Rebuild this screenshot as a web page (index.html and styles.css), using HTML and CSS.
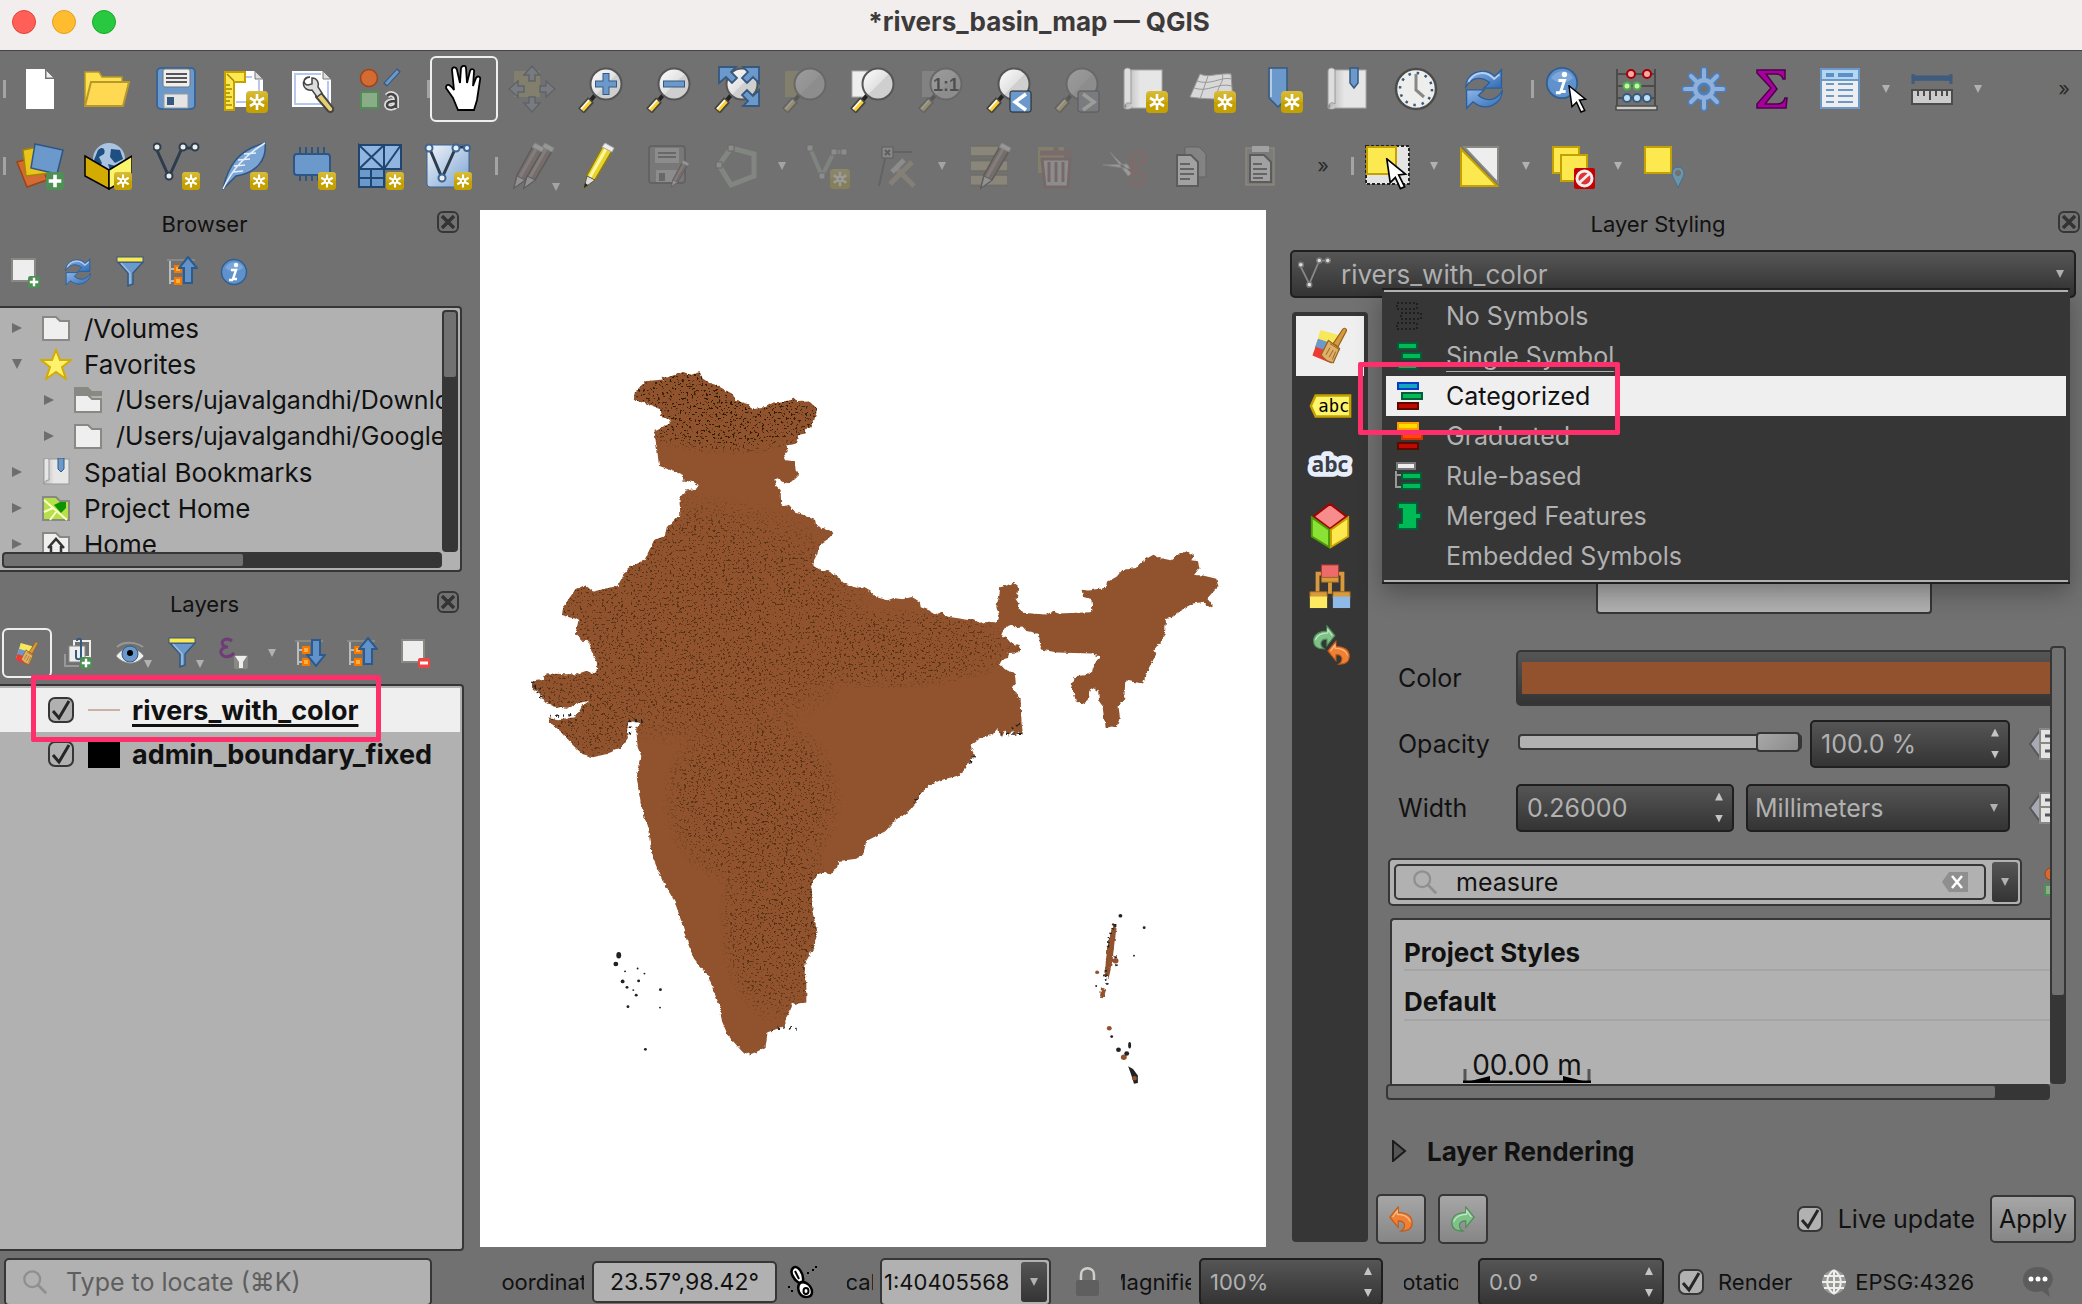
FILE: index.html
```html
<!DOCTYPE html>
<html lang="en">
<head>
    <meta charset="UTF-8">
    <meta name="viewport" content="width=device-width, initial-scale=1.0">
    <title>*rivers_basin_map — QGIS</title>
    <link rel="stylesheet" href="styles.css">
</head>
<body>
    <!-- shared icon parts -->
    <svg class="defs" aria-hidden="true">
        <defs>
            <linearGradient id="gold" x1="0" y1="0" x2="0" y2="1"><stop offset="0" stop-color="#d9bd3a"/><stop offset=".5" stop-color="#c9a80f"/><stop offset=".51" stop-color="#c4a000"/></linearGradient>
            <linearGradient id="glass" x1="0" y1="0" x2="1" y2="1"><stop offset="0" stop-color="#fff"/><stop offset=".5" stop-color="#e2e2e2"/><stop offset=".52" stop-color="#cfcfcf"/></linearGradient>
            <linearGradient id="blue" x1="0" y1="0" x2="1" y2="1"><stop offset="0" stop-color="#8fb5e6"/><stop offset="1" stop-color="#2f6cb5"/></linearGradient>
            <linearGradient id="sky" x1="0" y1="0" x2="1" y2="1"><stop offset="0" stop-color="#f2f5fa"/><stop offset="1" stop-color="#7ba3d3"/></linearGradient>
            <linearGradient id="paper" x1="0" y1="0" x2="1" y2="0"><stop offset="0" stop-color="#b9b9b9"/><stop offset=".4" stop-color="#e6e6e6"/></linearGradient>
        </defs>
        <symbol id="badge" viewBox="0 0 22 22"><rect width="22" height="22" rx="4" fill="url(#gold)"/><path d="M11 3v16M4 7l14 8M18 7L4 15" stroke="#fff" stroke-width="2.6"/><circle cx="11" cy="11" r="3.6" fill="#fff"/><circle cx="11" cy="11" r="1.4" fill="#c4a000"/></symbol>
        <symbol id="lens" viewBox="0 0 48 48"><path d="M20 29l-5 6" stroke="#222" stroke-width="4"/><path d="M15 35L5 46" stroke="#444" stroke-width="8"/><path d="M14 36l-8 9" stroke="#fcd02f" stroke-width="4.500"/><path d="M13 35l-8 9" stroke="#fff" stroke-width="1.500"/><circle cx="30" cy="19" r="15.500" fill="url(#glass)" stroke="#555" stroke-width="2"/></symbol>
        <symbol id="refresh" viewBox="0 0 48 48"><path d="M4 22C4 8 22-2 36 10l7-7v20H24l6-6C20 9 10 12 4 22z" fill="url(#blue)" stroke="#2a5f9e" stroke-width="1.500"/><path d="M44 26C44 40 26 50 12 38l-7 7V25h19l-6 6c10 8 20 5 26-5z" fill="url(#blue)" stroke="#2a5f9e" stroke-width="1.500"/><path d="M7 16C14 4 27 4 35 13l6-5" fill="none" stroke="#b9d0ec" stroke-width="2"/></symbol>
        <symbol id="info" viewBox="0 0 28 28"><circle cx="14" cy="14" r="12.500" fill="#5f92cd" stroke="#335f90" stroke-width="1.500"/><path d="M5 10c5-8 15-7 18 0-7 5-11 5-18 0z" fill="#8fb5e0" opacity=".6"/><circle cx="16" cy="7" r="2.200" fill="#fff"/><path d="M11 12h5l-3 9h4M9 22h4" fill="none" stroke="#fff" stroke-width="2.400"/></symbol>
        <symbol id="folder" viewBox="0 0 28 28"><path d="M1 3h13l4 4h9v19H1z" fill="#efefef" stroke="#888983" stroke-width="2"/></symbol>
        <symbol id="funnel" viewBox="0 0 28 32"><path d="M2 6l10 11v13l5-2V17L27 6z" fill="#6c99cb" stroke="#35597f" stroke-width="1.500"/><path d="M5 7l9 10v11" fill="none" stroke="#9cbce0" stroke-width="1.500"/><rect x="1" y="1" width="26" height="5" fill="#fce94f" stroke="#35597f"/></symbol>
        <symbol id="treelist" viewBox="0 0 30 30"><path d="M0 3h28" stroke="#888983" stroke-width="2"/><path d="M3 4v23M3 12h7M3 24h7" fill="none" stroke="#bbb" stroke-width="2"/><rect x="8" y="9" width="6" height="6" fill="#fcaf3e" stroke="#f57900" stroke-width="2"/><rect x="8" y="21" width="6" height="6" fill="#fcaf3e" stroke="#f57900" stroke-width="2"/></symbol>
        <symbol id="uparrow" viewBox="0 0 20 28"><path d="M10 1l9 11h-5v15H6V12H1z" fill="#6192ca" stroke="#2c5a8c" stroke-width="2"/></symbol>
        <symbol id="vec" viewBox="0 0 48 48"><path d="M3 6l13 29L29 6h12" fill="none" stroke="#2e3d4d" stroke-width="3"/><g fill="#eee" stroke="#2e3d4d" stroke-width="2"><circle cx="4" cy="5" r="3.500"/><circle cx="16" cy="34" r="3.500"/><circle cx="30" cy="5" r="3.500"/><circle cx="42" cy="5" r="3.500"/></g></symbol>
        <symbol id="pencil" viewBox="0 0 48 48"><path d="M9 46l3-13L28 4l9 5-17 29z" fill="#e8d430" stroke="#8d7d10" stroke-width="1.500"/><path d="M15 35L31 7" stroke="#fff8a0" stroke-width="3"/><path d="M9 46l3-12 8 4z" fill="#ddd" stroke="#555"/><path d="M27 5l3-4 9 5-2 4z" fill="#eee" stroke="#aaa"/><path d="M9 46l1-5 3 2z" fill="#222"/></symbol>
        <symbol id="oldpencil" viewBox="0 0 48 48"><path d="M9 46l3-13L28 4l9 5-17 29z" fill="#86645a" stroke="#3a2a26" stroke-width="1.500"/><path d="M15 35L31 7" stroke="#b59a90" stroke-width="3"/><path d="M9 46l3-12 8 4z" fill="#ddd" stroke="#333"/><path d="M27 5l3-4 9 5-2 4z" fill="#eee" stroke="#aaa"/></symbol>
        <symbol id="cursor" viewBox="0 0 26 40"><path d="M1 1l22 18-8 1 7 14-5 2-6-13-6 6z" fill="#fff" stroke="#000" stroke-width="2"/></symbol>
        <symbol id="brush" viewBox="0 0 44 48"><path d="M10 4l22 6-8 30L1 34z" fill="#f7e85b"/><path d="M7 15l22 7-4 13-22-9z" fill="#6c99cb"/><path d="M4 25l22 8-2 13L0 36z" fill="#ee3a34"/><path d="M26 21L38 3c2-3 6 0 4 3L32 25z" fill="#d99a3d" stroke="#96631c" stroke-width="1.500"/><path d="M20 17l14 10-8 18c-6-1-12-5-15-10z" fill="#deb06a" stroke="#96631c" stroke-width="1.500"/><path d="M22 21l12 8M17 35l5-9M21 38l5-9M25 41l4-10" stroke="#96631c" stroke-width="1.200"/></symbol>
        <symbol id="close" viewBox="0 0 22 22"><rect x="1" y="1" width="20" height="20" rx="5" fill="none" stroke="#363636" stroke-width="2"/><path d="M5 5l12 12M17 5L5 17" stroke="#333" stroke-width="3.500"/></symbol>
        <symbol id="search" viewBox="0 0 28 28"><circle cx="11" cy="11" r="8.500" fill="none" stroke="#8f8f8f" stroke-width="2.500"/><path d="M17 17l9 9" stroke="#8f8f8f" stroke-width="3"/></symbol>
        <symbol id="undo" viewBox="0 0 26 28"><path d="M1 12L10 1v6c9 0 15 4 15 11 0 6-5 9-12 9 5-3 6-11-3-11v7z" fill="#ef8136" stroke="#c25a17" stroke-width="1.200"/><path d="M4 12l5-7v4c7 0 12 2 14 8" fill="none" stroke="#ffc08c" stroke-width="1.200"/></symbol>
        <symbol id="redo" viewBox="0 0 26 28"><path d="M25 12L16 1v6C7 7 1 11 1 18c0 6 5 9 12 9-5-3-6-11 3-11v7z" fill="#7fc189" stroke="#4d8c57" stroke-width="1.200"/><path d="M22 12l-5-7v4C10 9 5 11 3 17" fill="none" stroke="#c5e8ca" stroke-width="1.200"/></symbol>
        <symbol id="plus" viewBox="0 0 20 20"><rect width="20" height="20" rx="4" fill="#4f8f55"/><path d="M10 3v14M3 10h14" stroke="#fff" stroke-width="4"/></symbol>
        <symbol id="datadef" viewBox="0 0 32 32"><path d="M12 1L1 16l11 15" fill="#a9a9b4" stroke="#55585c" stroke-width="2"/><rect x="11" y="1" width="20" height="30" fill="#e4e4e4" stroke="#888983" stroke-width="2"/><path d="M12 15h20" stroke="#888983" stroke-width="2"/><path d="M16 8h16M16 23h16" stroke="#555" stroke-width="3"/></symbol>
    </svg>

    <header class="titlebar">
        <div class="lights"><button class="light red" aria-label="Close"></button><button class="light amber" aria-label="Minimize"></button><button class="light green" aria-label="Zoom"></button></div>
        <h1>*rivers_basin_map — QGIS</h1>
    </header>

    <nav class="toolbars">
        <div class="toolbar">
            <i class="grip first"></i>
            <button class="tool" aria-label="New Project"><svg viewBox="0 0 48 48"><path d="M10 4h19v10h9v30H10z" fill="#fff"/><path d="M30 5v8h8z" fill="#eee" stroke="#777"/></svg></button>
            <button class="tool" aria-label="Open Project"><svg viewBox="0 0 48 48"><path d="M1 41V7h14l3 5h20v6" fill="#fce04f" stroke="#b8982a" stroke-width="1.500"/><path d="M1 41L7 17h38l-6 24z" fill="#ffd951" stroke="#b8982a" stroke-width="2"/></svg></button>
            <button class="tool" aria-label="Save Project"><svg viewBox="0 0 48 48"><rect x="5" y="3" width="38" height="41" rx="4" fill="#6c99cb" stroke="#3b6595" stroke-width="2"/><rect x="11" y="4" width="27" height="18" rx="2" fill="#eee" stroke="#777"/><path d="M14 9h21M14 13h21M14 17h21" stroke="#555" stroke-width="2"/><rect x="12" y="29" width="24" height="14" fill="#e4e4e4" stroke="#999"/><rect x="15" y="32" width="7" height="8" fill="#35597f"/></svg></button>
            <button class="tool" aria-label="New Print Layout"><svg viewBox="0 0 48 48"><path d="M4 6h31v8h8v28H4z" fill="#fff"/><path d="M14 38V12h18M39 15v22H16" fill="none" stroke="#b6c8ef" stroke-width="2"/><path d="M35 6v8h8z" fill="#ddd" stroke="#777"/><path d="M5 7h20v10H14v28H5z" fill="#fce94f" stroke="#c4a000" stroke-width="2"/><path d="M7 9l7 7M6 20h4M6 24h6M6 28h4M6 32h6M6 36h4M6 40h6" stroke="#a58700" stroke-width="1.500"/><use href="#badge" x="26" y="26" width="22" height="22"/></svg></button>
            <button class="tool" aria-label="Layout Manager"><svg viewBox="0 0 48 48"><path d="M4 6h31v8h8v28H4z" fill="#fff"/><path d="M33 9H7v30h33V16" fill="none" stroke="#b6c8ef" stroke-width="2"/><path d="M35 6v8h8z" fill="#ddd" stroke="#777"/><path d="M29 24l5 5 11 14c1 4-3 5-5 3L28 32z" fill="#e8cf72" stroke="#444" stroke-width="2"/><path d="M22 12c-8 0-7 8-2 8l4-1 0-6c6 0 7 6 6 9l4 6-5 4-5-7c-10 2-12-12-2-13z" fill="#ddd" stroke="#444" stroke-width="1.500"/></svg></button>
            <button class="tool" aria-label="Style Manager"><svg viewBox="0 0 48 48"><circle cx="13" cy="13" r="8.500" fill="#d46a34" stroke="#9d4413" stroke-width="1.500"/><path d="M29 20L43 5" stroke="#35597f" stroke-width="5"/><path d="M30 19L42 6" stroke="#6c99cb" stroke-width="3"/><rect x="5" y="27" width="17" height="16" fill="#8aad88" stroke="#4f8f55" stroke-width="2"/><path d="M31 31c4-4 9-1 9 3v9M40 36c-6 0-9 1-9 4s6 4 9 0" fill="none" stroke="#ddd" stroke-width="6"/><path d="M31 31c4-4 9-1 9 3v9M40 36c-6 0-9 1-9 4s6 4 9 0" fill="none" stroke="#444" stroke-width="2.500"/></svg></button>
            <i class="grip"></i>
            <button class="tool active" aria-label="Pan Map"><svg viewBox="0 0 48 48"><path d="M18 45L13 33 6 23c0-5 4-4 8 2L12 5c0-3 4-4 5 0l3 13 1-15c1-3 5-3 5 0l1 15 3-12c1-3 5-2 4 1l-1 14 3-8c2-3 5-1 4 2l-3 20-3 10z" fill="#fff" stroke="#000" stroke-width="1.800"/></svg></button>
            <button class="tool off" aria-label="Pan to Selection"><svg viewBox="0 0 48 48"><rect x="6" y="6" width="26" height="26" fill="#b6a04c"/><path d="M24 1l8 9h-5v6h-6v-6h-5zM24 47l8-9h-5v-6h-6v6h-5zM1 24l9-8v5h6v6h-6v5zM47 24l-9-8v5h-6v6h6v5z" fill="#8796a8" stroke="#34475c" stroke-width="1.500"/></svg></button>
            <button class="tool" aria-label="Zoom In"><svg viewBox="0 0 48 48"><use href="#lens"/><path d="M30 8v22M19 19h22" stroke="#35597f" stroke-width="7"/><path d="M30 9v20M20 19h20" stroke="#6c99cb" stroke-width="5"/></svg></button>
            <button class="tool" aria-label="Zoom Out"><svg viewBox="0 0 48 48"><use href="#lens"/><path d="M19 19h22" stroke="#35597f" stroke-width="7"/><path d="M20 19h20" stroke="#6c99cb" stroke-width="5"/></svg></button>
            <button class="tool" aria-label="Zoom Full"><svg viewBox="0 0 48 48"><use href="#lens"/><path d="M7 2h17l-5 5 6 6-5 5-6-6-7 6zM47 2v16l-6-6-6 6-5-5 6-6-5-5zM47 41v-16l-6 6-6-6-5 5 6 6-5 5z" fill="#6c99cb" stroke="#35597f" stroke-width="1.800"/></svg></button>
            <button class="tool off" aria-label="Zoom to Selection"><svg viewBox="0 0 48 48"><rect x="5" y="6" width="22" height="26" fill="#b6a04c"/><use href="#lens"/></svg></button>
            <button class="tool" aria-label="Zoom to Layer"><svg viewBox="0 0 48 48"><rect x="4" y="6" width="22" height="26" fill="#eee" stroke="#aaa"/><use href="#lens"/></svg></button>
            <button class="tool off" aria-label="Zoom to Native Resolution"><svg viewBox="0 0 48 48"><rect x="6" y="6" width="18" height="26" fill="#aaa"/><use href="#lens"/><text x="30" y="26" class="ratio">1:1</text></svg></button>
            <button class="tool" aria-label="Zoom Last"><svg viewBox="0 0 48 48"><use href="#lens"/><rect x="26" y="26" width="21" height="21" rx="2" fill="#6c99cb" stroke="#222"/><path d="M42 29l-11 8 11 8" fill="none" stroke="#fff" stroke-width="3.500"/></svg></button>
            <button class="tool off" aria-label="Zoom Next"><svg viewBox="0 0 48 48"><use href="#lens"/><rect x="26" y="26" width="21" height="21" rx="2" fill="#8b97a2" stroke="#222"/><path d="M31 29l11 8-11 8" fill="none" stroke="#fff" stroke-width="3.500"/></svg></button>
            <button class="tool" aria-label="New Map View"><svg viewBox="0 0 48 48"><rect x="6" y="5" width="36" height="38" fill="url(#paper)" stroke="#aaa"/><path d="M4 43V6c0-4 7-4 7 0v33c-3-3-7 0-7 4 2 2 8 1 8-1" fill="#ddd" stroke="#999"/><use href="#badge" x="26" y="26" width="22" height="22"/></svg></button>
            <button class="tool" aria-label="New 3D Map View"><svg viewBox="0 0 48 48"><path d="M12 9c8 4 18-1 31 0l2 29c-14-6-26-3-43-6z" fill="#d8d8d8" stroke="#999"/><path d="M6 23c14 5 24-6 38-2M9 16c14 5 24-5 35-2M20 11L12 34M34 9c4 8-8 14-4 25" fill="none" stroke="#999"/><use href="#badge" x="26" y="26" width="22" height="22"/></svg></button>
            <button class="tool" aria-label="New Spatial Bookmark"><svg viewBox="0 0 48 48"><path d="M13 3h18v30l-9 9-9-9z" fill="#6c99cb" stroke="#35597f" stroke-width="1.500"/><path d="M15 4v28" stroke="#b4cbe6" stroke-width="2"/><use href="#badge" x="25" y="26" width="22" height="22"/></svg></button>
            <button class="tool" aria-label="Show Bookmarks"><svg viewBox="0 0 48 48"><rect x="6" y="5" width="36" height="38" fill="url(#paper)" stroke="#aaa"/><path d="M4 43V6c0-4 7-4 7 0v33c-3-3-7 0-7 4 2 2 8 1 8-1" fill="#ddd" stroke="#999"/><path d="M26 3h8v15l-4 5-4-5z" fill="#6c99cb" stroke="#35597f" stroke-width="1.500"/></svg></button>
            <button class="tool" aria-label="Temporal Controller"><svg viewBox="0 0 48 48"><circle cx="24" cy="24" r="20" fill="#eeeeec" stroke="#4c4c4a" stroke-width="2.500"/><circle cx="24" cy="24" r="16" fill="none" stroke="#35597f" stroke-width="2.500" stroke-dasharray="2.500 5.900"/><path d="M24 9v16l8 7" fill="none" stroke="#888983" stroke-width="3"/></svg></button>
            <button class="tool" aria-label="Refresh"><svg viewBox="0 0 48 48"><use href="#refresh" x="2" y="2" width="44" height="44"/></svg></button>
            <i class="grip"></i>
            <button class="tool" aria-label="Identify Features"><svg viewBox="0 0 48 48"><use href="#info" x="1" y="1" width="34" height="34"/><use href="#cursor" x="22" y="20" width="24" height="30"/></svg></button>
            <button class="tool" aria-label="Field Calculator"><svg viewBox="0 0 48 48"><path d="M5 4v38M43 4v38M5 9h38M5 21h38M5 33h38" fill="none" stroke="#4c4c4a" stroke-width="2"/><rect x="4" y="41" width="41" height="4" fill="#ccc" stroke="#4c4c4a" stroke-width="1.500"/><g stroke-width="2"><g fill="#f7a8a8" stroke="#a40000"><circle cx="19" cy="9" r="4"/><circle cx="35" cy="9" r="4"/></g><g fill="#c9f5a8" stroke="#4fae4f"><circle cx="15" cy="21" r="3.500"/><circle cx="25" cy="21" r="3.500"/></g><g fill="#bfe0f2" stroke="#35597f"><circle cx="15" cy="33" r="4"/><circle cx="25" cy="33" r="4"/><circle cx="35" cy="33" r="4"/></g></g></svg></button>
            <button class="tool" aria-label="Toolbox"><svg viewBox="0 0 48 48"><g stroke="#4a7fc0" stroke-width="7" stroke-linecap="round"><path d="M24 5v38M5 24h38M11 11l26 26M37 11L11 37"/></g><circle cx="24" cy="24" r="12" fill="#8fb0db" stroke="#4a7fc0" stroke-width="2"/><g stroke="#8fb0db" stroke-width="4" stroke-linecap="round"><path d="M24 5v10M24 33v10M5 24h10M33 24h10M11 11l8 8M29 29l8 8M37 11l-8 8M19 29l-8 8"/></g><circle cx="24" cy="24" r="5" fill="#717171" stroke="#4a7fc0" stroke-width="3"/></svg></button>
            <button class="tool" aria-label="Statistics"><svg viewBox="0 0 48 48"><path d="M9 5h28v9h-2c-1-4-3-5-7-5H18l11 15-12 15h12c5 0 7-2 8-6h2l-1 10H9v-4l14-16L9 8z" fill="#a8009f" stroke="#4d0049" stroke-width="1.500"/></svg></button>
            <button class="tool" aria-label="Attribute Table"><svg viewBox="0 0 48 48"><rect x="5" y="4" width="38" height="39" fill="#eee" stroke="#6c99cb" stroke-width="2"/><rect x="6" y="5" width="36" height="10" fill="#b4d7ef"/><path d="M5 15h38" stroke="#6c99cb" stroke-width="2"/><path d="M10 10h8M22 10h15" stroke="#5c8fc9" stroke-width="4"/><path d="M10 19h8M22 19h15M10 25h8M22 25h15M10 31h8M22 31h15M10 37h8M22 37h15" stroke="#6c99cb" stroke-width="2"/></svg></button>
            <button class="more" aria-label="Table options"></button>
            <button class="tool" aria-label="Measure Line"><svg viewBox="0 0 48 48"><path d="M5 14h38M5 9v10M43 9v10" stroke="#3f5b7d" stroke-width="3"/><path d="M5 13h38" stroke="#3f5b7d" stroke-width="5"/><rect x="4" y="25" width="40" height="14" fill="#ccc" stroke="#4c4c4a" stroke-width="2"/><path d="M10 25v6M16 25v6M22 25v10M28 25v6M34 25v6M39 25v6" stroke="#4c4c4a" stroke-width="2"/></svg></button>
            <button class="more" aria-label="Measure options"></button>
            <button class="extend end" aria-label="More tools">»</button>
        </div>
        <div class="toolbar second">
            <i class="grip first"></i>
            <button class="tool" aria-label="Data Source Manager"><svg viewBox="0 0 48 48"><path d="M1 20l22-6 8 24-20 7z" fill="#d46a34" stroke="#9d4413" stroke-width="1.500"/><path d="M7 8l20-4 7 27-24 3z" fill="#e8c41c" stroke="#a58700" stroke-width="1.500"/><path d="M19 2l28 6-6 24-26-6z" fill="#6c99cb" stroke="#2e5684" stroke-width="1.500"/><use href="#plus" x="30" y="30" width="18" height="18"/></svg></button>
            <button class="tool" aria-label="New GeoPackage Layer"><svg viewBox="0 0 48 48"><circle cx="25" cy="17" r="16" fill="#a9c3e0"/><path d="M14 8c5-5 8 0 6 4l-5 3 3 6-3 5-5-8zM27 7l9 1 3 9-8 4-5-6zM24 22l8 2-5 8z" fill="#1f4f80"/><path d="M1 14l24 14v19L1 34z" fill="#d4ab00" stroke="#000" stroke-width="1.500"/><path d="M25 28l23-14v20L25 47z" fill="#fcf46b" stroke="#000" stroke-width="1.500"/><use href="#badge" x="30" y="30" width="18" height="18"/></svg></button>
            <button class="tool" aria-label="New Shapefile Layer"><svg viewBox="0 0 48 48"><use href="#vec" x="1"/><use href="#badge" x="30" y="30" width="18" height="18"/></svg></button>
            <button class="tool" aria-label="New SpatiaLite Layer"><svg viewBox="0 0 48 48"><path d="M3 47C8 24 18 8 45 1c2 16-8 30-29 33z" fill="#7aa5d5" stroke="#2e5684" stroke-width="1.500"/><path d="M3 47C12 28 24 14 45 1M14 24l11-1M18 18l12-1M24 12l12-1M13 30l10-1" fill="none" stroke="#e6eef8" stroke-width="1.500"/><use href="#badge" x="30" y="30" width="18" height="18"/></svg></button>
            <button class="tool" aria-label="New Temporary Layer"><svg viewBox="0 0 48 48"><path d="M12 5v34M18 5v34M24 5v34M30 5v34M36 5v34" stroke="#2e5684" stroke-width="2"/><rect x="6" y="12" width="36" height="21" rx="3" fill="#6c99cb" stroke="#2e5684" stroke-width="2"/><use href="#badge" x="30" y="30" width="18" height="18"/></svg></button>
            <button class="tool" aria-label="New Mesh Layer"><svg viewBox="0 0 48 48"><rect x="3" y="3" width="42" height="24" fill="#8fb5e0"/><rect x="3" y="27" width="24" height="18" fill="#6c99cb"/><path d="M3 3h42v24H3zM28 3v42H3V3l25 24M28 3L3 27M45 3L28 27M3 36h25M15 27v18" fill="none" stroke="#20466f" stroke-width="2"/><use href="#badge" x="30" y="30" width="18" height="18"/></svg></button>
            <button class="tool" aria-label="New Virtual Layer"><svg viewBox="0 0 48 48"><rect x="3" y="3" width="42" height="42" rx="3" fill="url(#sky)" stroke="#3b6595"/><path d="M5 5l13 31L32 5h12" fill="none" stroke="#2e3d4d" stroke-width="3"/><g fill="#eee" stroke="#3b6595" stroke-width="2"><circle cx="5" cy="6" r="3.500"/><circle cx="18" cy="36" r="3.500"/><circle cx="32" cy="6" r="3.500"/><circle cx="43" cy="6" r="3"/></g><use href="#badge" x="30" y="30" width="18" height="18"/></svg></button>
            <i class="grip"></i>
            <button class="tool off menu" aria-label="Current Edits"><svg viewBox="0 0 48 48"><use href="#oldpencil" x="7"/><use href="#oldpencil" x="-3"/></svg></button>
            <button class="tool" aria-label="Toggle Editing"><svg viewBox="0 0 48 48"><use href="#pencil" x="-1"/></svg></button>
            <button class="tool off" aria-label="Save Layer Edits"><svg viewBox="0 0 48 48"><rect x="5" y="4" width="36" height="37" rx="3" fill="#888" stroke="#444" stroke-width="2"/><rect x="11" y="6" width="24" height="15" fill="#ccc"/><path d="M14 11h18M14 15h18" stroke="#555" stroke-width="2"/><rect x="12" y="28" width="22" height="12" fill="#ccc"/><rect x="15" y="31" width="6" height="8" fill="#555"/><use href="#oldpencil" x="22" y="17" width="28" height="30"/></svg></button>
            <button class="tool off" aria-label="Add Polygon"><svg viewBox="0 0 48 48"><path d="M7 23L19 6l23 6v22L19 43z" fill="none" stroke="#a3b9a3" stroke-width="5"/><path d="M4 20h6v6H4zM16 3h6v6h-6z" fill="#ccc" stroke="#555"/></svg></button>
            <button class="more dim" aria-label="Polygon options"></button>
            <button class="tool off" aria-label="Vertex Tool"><svg viewBox="0 0 48 48"><path d="M6 6l12 28L30 10h12" fill="none" stroke="#9db29d" stroke-width="4"/><path d="M3 3h6v6H3zM15 31h6v6h-6zM27 7h6v6h-6zM37 7h6v6h-6z" fill="#ccc" stroke="#666"/><use href="#badge" x="26" y="27" width="20" height="20"/></svg></button>
            <button class="tool off" aria-label="Modify Attributes"><svg viewBox="0 0 48 48"><path d="M7 44L14 12M18 10h22" stroke="#444" stroke-width="2"/><rect x="10" y="5" width="11" height="11" fill="#bbb" stroke="#333"/><path d="M13 8l5 5M18 8l-5 5" stroke="#333" stroke-width="2"/><path d="M24 26l18 18M40 20L18 42" stroke="#b8a37e" stroke-width="5"/><path d="M20 30l12-12" stroke="#ccc" stroke-width="5"/></svg></button>
            <button class="more dim" aria-label="Vertex options"></button>
            <button class="tool off" aria-label="Edit Multiple"><svg viewBox="0 0 48 48"><path d="M7 9h36M7 24h36M7 38h36" stroke="#c9bb80" stroke-width="9"/><path d="M6 4h38M6 14h38M6 18h38M6 29h38M6 33h38M6 44h38" stroke="#6b6130"/><use href="#oldpencil" x="8"/></svg></button>
            <button class="tool off" aria-label="Delete Selected"><svg viewBox="0 0 48 48"><rect x="6" y="5" width="26" height="26" fill="#b6a04c"/><path d="M8 11h32M24 5v6" stroke="#a45e5e" stroke-width="5"/><path d="M10 17h28l-2 28H13z" fill="#ccc" stroke="#955" stroke-width="3"/><path d="M17 20v20M24 20v20M31 20v20" stroke="#955" stroke-width="3"/></svg></button>
            <button class="tool off strong" aria-label="Cut Features"><svg viewBox="0 0 48 48"><path d="M3 23l28 4-4-5zM10 10l22 22-4 2z" fill="#ccc" stroke="#999"/><path d="M30 27l4 5M30 26l4-5" stroke="#a45e5e" stroke-width="3"/><ellipse cx="38" cy="17" rx="7" ry="6" fill="none" stroke="#a45e5e" stroke-width="3"/><ellipse cx="37" cy="36" rx="6" ry="7" fill="none" stroke="#a45e5e" stroke-width="3"/></svg></button>
            <button class="tool off strong" aria-label="Copy Features"><svg viewBox="0 0 48 48"><path d="M17 5h14l7 7v23H17z" fill="#999" stroke="#555"/><path d="M9 13h14l7 7v24H9z" fill="#ddd" stroke="#444" stroke-width="2"/><path d="M12 22h10M12 27h14M12 32h14M12 37h10" stroke="#555" stroke-width="2"/></svg></button>
            <button class="tool off strong" aria-label="Paste Features"><svg viewBox="0 0 48 48"><rect x="10" y="6" width="28" height="37" fill="#888" stroke="#c9b37e"/><rect x="16" y="4" width="17" height="6" fill="#ddd"/><path d="M14 13h14l7 7v20H14z" fill="#ddd" stroke="#444" stroke-width="2"/><path d="M17 22h9M17 27h14M17 32h14M17 36h10" stroke="#555" stroke-width="2"/></svg></button>
            <button class="extend" aria-label="More editing tools">»</button>
            <i class="grip"></i>
            <button class="tool" aria-label="Select Features"><svg viewBox="0 0 48 48"><rect x="2" y="4" width="43" height="38" fill="#e4e4e4" stroke="#222" stroke-width="2" stroke-dasharray="3 2"/><rect x="3" y="5" width="29" height="27" fill="#fce94f" stroke="#c4a000" stroke-width="2"/><use href="#cursor" x="18" y="16" width="30" height="34"/></svg></button>
            <button class="more" aria-label="Select options"></button>
            <button class="tool" aria-label="Invert Selection"><svg viewBox="0 0 48 48"><path d="M8 5h34v36z" fill="#eee" stroke="#888983" stroke-width="2"/><path d="M5 7v37h36z" fill="#fce94f" stroke="#c4a000" stroke-width="2"/></svg></button>
            <button class="more" aria-label="Invert options"></button>
            <button class="tool" aria-label="Deselect Features"><svg viewBox="0 0 48 48"><rect x="5" y="5" width="26" height="26" fill="#fce94f" stroke="#c4a000" stroke-width="2"/><rect x="13" y="13" width="26" height="26" fill="#fce94f" stroke="#c4a000" stroke-width="2"/><rect x="26" y="26" width="21" height="21" rx="2" fill="#c40000"/><circle cx="36.500" cy="36.500" r="7.500" fill="#d33" stroke="#eee" stroke-width="3"/><path d="M31 41l11-10" stroke="#eee" stroke-width="3"/></svg></button>
            <button class="more" aria-label="Deselect options"></button>
            <button class="tool" aria-label="Select by Location"><svg viewBox="0 0 48 48"><rect x="5" y="5" width="26" height="26" fill="#fce94f" stroke="#c4a000" stroke-width="2"/><path d="M38 46c-3-8-6-11-6-15a6 6 0 0 1 12 0c0 4-3 7-6 15z" fill="#6d93ab" stroke="#476f88"/><circle cx="38" cy="31" r="3" fill="#717171"/></svg></button>
        </div>
    </nav>

    <main class="workspace">
        <div class="left">
            <section class="dock">
                <header class="dock-title"><h2>Browser</h2><button class="x" aria-label="Close Browser"><svg><use href="#close"/></svg></button></header>
                <div class="minibar">
                    <button aria-label="Add Layer"><svg viewBox="0 0 32 32"><rect x="2" y="3" width="23" height="22" fill="#eee" stroke="#888983" stroke-width="2"/><use href="#plus" x="18" y="20" width="12" height="12"/></svg></button>
                    <button aria-label="Refresh Browser"><svg viewBox="0 0 32 32"><use href="#refresh" x="1" y="1" width="30" height="30"/></svg></button>
                    <button aria-label="Filter Browser"><svg viewBox="0 0 32 32"><use href="#funnel" x="2" y="0" width="28" height="32"/></svg></button>
                    <button aria-label="Collapse All"><svg viewBox="0 0 32 32"><use href="#treelist" x="1" y="1" width="30" height="30"/><use href="#uparrow" x="12" y="0" width="20" height="28"/></svg></button>
                    <button aria-label="Properties"><svg viewBox="0 0 32 32"><use href="#info" x="2" y="2" width="28" height="28"/></svg></button>
                </div>
                <div class="tree">
                    <ul>
                        <li><i class="tri"></i><svg><use href="#folder"/></svg>/Volumes</li>
                        <li><i class="tri open"></i><svg class="star" viewBox="0 0 32 32"><path d="M16 2l4 10h11l-9 7 4 12-10-7-10 7 4-12-9-7h11z" fill="#fcf26b" stroke="#d4ab00" stroke-width="2"/></svg>Favorites</li>
                        <li class="child"><i class="tri"></i><svg viewBox="0 0 28 28"><path d="M0 1h14l4 4h10v5H0z" fill="#888983"/><path d="M1 9h13l4 4h9v13H1z" fill="#efefef" stroke="#888983" stroke-width="2"/></svg>/Users/ujavalgandhi/Downloads</li>
                        <li class="child"><i class="tri"></i><svg><use href="#folder"/></svg>/Users/ujavalgandhi/Google Drive</li>
                        <li><i class="tri"></i><svg viewBox="0 0 28 28"><rect x="2" y="1" width="25" height="25" fill="url(#paper)" stroke="#999"/><path d="M2 26V2c0-2 5-2 5 0v20c-3 0-5 2-5 4" fill="#e6e6e6" stroke="#999"/><path d="M16 0h6v11l-3 3-3-3z" fill="#6c99cb" stroke="#35597f"/></svg>Spatial Bookmarks</li>
                        <li><i class="tri"></i><svg viewBox="0 0 28 28"><path d="M1 3h13l4 4h9v19H1z" fill="#b6e04a" stroke="#888983" stroke-width="2"/><path d="M2 6l23 20M2 18l9-4M8 26l6-8" stroke="#fdfdc8" stroke-width="2"/><path d="M12 11l6-3h6v6l-5 5z" fill="#0c9300"/></svg>Project Home</li>
                        <li><i class="tri"></i><svg viewBox="0 0 28 28"><use href="#folder"/><path d="M6 18l8-9 8 9M9 16v12M19 16v12" fill="none" stroke="#333" stroke-width="2.500"/></svg>Home</li>
                    </ul>
                    <div class="bar v"><i></i></div>
                    <div class="bar h"><i></i></div>
                </div>
            </section>

            <section class="dock layers">
                <header class="dock-title"><h2>Layers</h2><button class="x" aria-label="Close Layers"><svg><use href="#close"/></svg></button></header>
                <div class="minibar">
                    <button class="active" aria-label="Layer Styling"><svg viewBox="0 0 32 32"><use href="#brush" x="1" y="4" width="30" height="25"/></svg></button>
                    <button aria-label="Add Group"><svg viewBox="0 0 32 32"><path d="M3 17v12h14" fill="none" stroke="#999" stroke-width="2"/><rect x="12" y="4" width="16" height="16" fill="#717171" stroke="#eee" stroke-width="2"/><rect x="7" y="9" width="16" height="16" fill="#eee" stroke="#888983"/><path d="M14 13v7c0 3 5 3 5 0V4c0-3-4-3-4 0" fill="none" stroke="#35597f" stroke-width="2"/><use href="#plus" x="18" y="20" width="12" height="12"/></svg></button>
                    <button class="menu" aria-label="Map Themes"><svg viewBox="0 0 32 32"><path d="M3 10C10 4 22 5 29 10" fill="none" stroke="#999" stroke-width="2"/><path d="M2 19c8-11 20-10 28 0-8 10-20 9-28 0z" fill="#eee" stroke="#888"/><circle cx="16" cy="17" r="8" fill="#6c99cb" stroke="#35597f"/><circle cx="16" cy="16" r="3" fill="#000"/></svg></button>
                    <button class="menu" aria-label="Filter Legend"><svg viewBox="0 0 32 32"><use href="#funnel" x="2" y="0" width="28" height="32"/></svg></button>
                    <button aria-label="Filter by Expression"><svg viewBox="0 0 32 32"><path d="M14 4c-5-4-12-1-9 4 1 2 4 2 5 2-5 0-8 3-7 6 2 5 9 5 13 0" fill="none" stroke="#6f3b78" stroke-width="3"/><rect x="16" y="18" width="14" height="14" rx="2" fill="#888983"/><path d="M17 19h12l-4 6v6h-4v-6z" fill="#eee"/></svg></button>
                    <button class="more" aria-label="Expression options"></button>
                    <button aria-label="Expand All"><svg viewBox="0 0 32 32"><use href="#treelist" x="1" y="1" width="30" height="30"/><g transform="rotate(180 21 15)"><use href="#uparrow" x="10" y="0" width="20" height="28"/></g></svg></button>
                    <button aria-label="Collapse All Layers"><svg viewBox="0 0 32 32"><use href="#treelist" x="1" y="1" width="30" height="30"/><use href="#uparrow" x="12" y="0" width="20" height="28"/></svg></button>
                    <button aria-label="Remove Layer"><svg viewBox="0 0 32 32"><rect x="4" y="3" width="22" height="22" fill="#eee" stroke="#888983" stroke-width="2"/><rect x="20" y="21" width="12" height="10" rx="2" fill="#ef4444"/><path d="M22 26h8" stroke="#fff" stroke-width="3"/></svg></button>
                </div>
                <div class="layer-list">
                    <label class="layer selected"><input type="checkbox" class="check" checked><i class="line-swatch"></i><span>rivers_with_color</span></label>
                    <label class="layer"><input type="checkbox" class="check" checked><i class="fill-swatch"></i><span>admin_boundary_fixed</span></label>
                    <div class="callout callout-layer"></div>
                </div>
            </section>
        </div>

        <div class="canvas">
            <svg viewBox="480 210 786 1037" role="img" aria-label="Map of India">
                <defs>
                    <!-- uncovered specks between the river lines -->
                    <filter id="rivers" x="0" y="0" width="1" height="1">
                        <feTurbulence type="fractalNoise" baseFrequency=".2 .23" numOctaves="3" seed="8"/>
                        <feColorMatrix values="0 0 0 0 .02  0 0 0 0 .01  0 0 0 0 0  14 0 0 0 -8.500"/>
                    </filter>
                    <filter id="coast" x="-.05" y="-.05" width="1.1" height="1.1">
                        <feTurbulence type="fractalNoise" baseFrequency=".12" numOctaves="2" seed="3"/>
                        <feDisplacementMap in="SourceGraphic" scale="8" xChannelSelector="R" yChannelSelector="G"/>
                    </filter>
                    <clipPath id="land"><use href="#india"/></clipPath>
                    <radialGradient id="fade"><stop offset="0" stop-color="#fff"/><stop offset=".75" stop-color="#ddd"/><stop offset="1" stop-color="#fff" stop-opacity="0"/></radialGradient>
                    <mask id="density" maskUnits="userSpaceOnUse" x="0" y="0" width="1568" height="1650">
                        <ellipse cx="470" cy="120" rx="250" ry="110" fill="url(#fade)"/>
                        <g opacity=".6">
                            <ellipse cx="400" cy="590" rx="380" ry="280" fill="url(#fade)"/>
                            <ellipse cx="800" cy="650" rx="280" ry="90" fill="url(#fade)"/>
                            <ellipse cx="520" cy="980" rx="190" ry="200" fill="url(#fade)"/>
                            <ellipse cx="570" cy="1240" rx="120" ry="230" fill="url(#fade)"/>
                            <ellipse cx="170" cy="790" rx="130" ry="110" fill="url(#fade)"/>
                        </g>
                    </mask>
                </defs>
                <g transform="translate(500 350) scale(.4847 .4592)">
                    <g filter="url(#coast)">
                        <path id="india" fill="#91522d" d="M278 92L300 68 336 64 333 58 345 60 378 48 395 54 412 48 418 62 432 72 446 76 480 96 486 110 512 118 520 130 548 124 565 114 600 110 606 104 614 113 638 112 655 128 648 154 642 170 630 172 628 182 616 186 610 204 590 208 594 218 586 228 590 240 608 242 610 262 617 272 608 282 592 290 580 286 576 278 566 282 570 296 579 305 580 335 586 341 596 337 610 354 628 360 650 370 652 381 688 399 676 412 662 422 658 434 653 447 643 468 660 478 678 482 698 494 704 502 722 512 735 518 748 516 768 528 775 538 800 545 812 540 830 543 850 538 866 548 868 560 890 569 896 576 912 570 918 580 945 584 966 588 978 588 990 594 1010 592 1026 594 1030 580 1024 558 1030 535 1032 516 1048 513 1058 507 1069 516 1068 530 1066 542 1072 552 1070 562 1078 572 1110 575 1128 576 1140 569 1152 574 1218 571 1222 566 1220 542 1203 538 1200 522 1214 524 1238 520 1250 518 1252 506 1272 494 1284 479 1312 475 1325 460 1348 446 1362 453 1384 458 1400 445 1418 438 1432 448 1426 458 1440 460 1443 475 1432 490 1450 491 1478 498 1482 516 1468 530 1460 540 1471 556 1464 560 1452 548 1430 552 1412 562 1390 580 1374 586 1372 615 1366 630 1350 652 1354 662 1340 690 1326 726 1290 720 1288 760 1276 775 1279 800 1272 822 1262 820 1250 823 1246 800 1243 775 1236 765 1234 742 1226 736 1216 742 1212 765 1200 772 1188 765 1184 748 1178 738 1182 718 1190 710 1210 708 1222 698 1230 678 1238 668 1220 661 1150 659 1116 652 1112 620 1104 616 1086 612 1078 602 1062 604 1056 598 1042 604 1034 620 1046 628 1054 638 1068 642 1075 654 1070 658 1050 660 1048 671 1036 674 1031 684 1042 696 1062 704 1064 724 1056 735 1066 744 1067 757 1074 758 1076 810 1079 838 1070 830 1064 842 1056 828 1050 842 1042 828 1036 842 1030 838 1028 822 1016 838 988 846 971 860 978 884 968 898 948 926 905 938 888 945 868 966 856 988 838 1011 818 1022 795 1048 755 1070 750 1098 735 1108 700 1113 694 1128 682 1142 670 1137 654 1142 642 1168 646 1200 644 1222 650 1245 655 1268 648 1300 632 1330 628 1352 632 1380 632 1421 604 1424 598 1440 586 1462 588 1472 552 1486 548 1518 530 1528 515 1534 500 1528 470 1492 458 1462 452 1425 440 1395 430 1362 402 1330 385 1285 376 1250 360 1200 340 1165 325 1130 313 1100 306 1045 296 1010 290 985 282 930 292 885 284 865 281 825 290 812 265 808 262 830 264 845 250 866 220 880 192 887 170 880 150 860 130 835 104 812 100 800 120 804 155 800 170 775 184 764 165 768 135 781 110 776 90 765 80 745 66 738 66 722 90 718 94 704 136 706 158 706 180 698 186 704 200 698 200 680 192 665 183 634 168 633 156 618 162 588 128 577 130 560 155 522 175 512 192 526 242 514 264 475 298 458 318 414 340 405 344 386 372 358 370 322 384 306 405 302 410 294 400 288 378 284 378 272 328 252 324 215 318 178 336 168 350 160 349 150 332 146 330 128 300 116 276 110z"/>
                        <g fill="none" stroke="#222" stroke-width="5" stroke-dasharray="3 9 6 7">
                            <path d="M66 722l8 18 12 18M70 730l14 8M104 797l52-2M266 808h28M268 820v20M1032 836l46 0M1056 824l22-12M560 1480l30-6 28 6M978 884l-10 20M643 1250h10M868 966l-14 22"/>
                        </g>
                    </g>
                    <g clip-path="url(#land)"><g mask="url(#density)"><rect width="1568" height="1600" filter="url(#rivers)"/></g></g>
                    <g filter="url(#coast)">
                        <path d="M1266 1248l6 10-4 30-4 40-8 40-8-4 2-36 6-44z" fill="#91522d"/>
                        <path d="M1240 1388l10 6-4 16-8-2z" fill="#91522d"/>
                        <path d="M1268 1250l-12 30-2 25M1250 1350l-2 20 6 12M1270 1318l2 24" fill="none" stroke="#222" stroke-width="5" stroke-dasharray="4 6"/>
                    </g>
                    <g fill="#91522d"><circle cx="1232" cy="1355" r="4"/><circle cx="1257" cy="1477" r="5"/><circle cx="1287" cy="1540" r="6"/><circle cx="1270" cy="1330" r="6"/></g>
                    <g fill="#222">
                        <ellipse cx="245" cy="1318" rx="5" ry="7"/><circle cx="239" cy="1337" r="5"/><circle cx="253" cy="1375" r="4"/><circle cx="258" cy="1353" r="2"/><circle cx="284" cy="1347" r="2"/><circle cx="298" cy="1358" r="2"/><circle cx="286" cy="1374" r="3"/><circle cx="262" cy="1388" r="3"/><circle cx="275" cy="1394" r="2"/><circle cx="281" cy="1405" r="3"/><circle cx="331" cy="1393" r="3"/><circle cx="330" cy="1432" r="2"/><circle cx="264" cy="1430" r="3"/><circle cx="300" cy="1523" r="3"/>
                        <circle cx="1230" cy="1385" r="2"/><circle cx="1280" cy="1232" r="4"/><circle cx="1329" cy="1258" r="3"/><circle cx="1308" cy="1319" r="2"/><circle cx="1262" cy="1495" r="3"/><circle cx="1276" cy="1524" r="5"/><ellipse cx="1299" cy="1514" rx="3" ry="7"/><circle cx="1293" cy="1532" r="5"/><path d="M1296 1560l10 6 10 14 0 16-8 2-6-20z"/>
                    </g>
                    <circle cx="1309" cy="1586" r="5" fill="#91522d"/>
                </g>
            </svg>
        </div>

        <section class="styling">
            <header class="dock-title"><h2>Layer Styling</h2><button class="x" aria-label="Close Layer Styling"><svg><use href="#close"/></svg></button></header>
            <div class="combo layer-combo">
                <svg viewBox="0 0 48 48"><path d="M3 12l13 26L30 5h12" fill="none" stroke="#888" stroke-width="2.500"/><g fill="#ddd" stroke="#777" stroke-width="2"><circle cx="4" cy="11" r="3.500"/><circle cx="16" cy="39" r="3.500"/><circle cx="30" cy="5" r="3.500"/><circle cx="42" cy="5" r="3.500"/></g></svg>
                <select aria-label="Layer"><option>rivers_with_color</option></select>
            </div>
            <div class="styling-body">
                <div class="pages">
                    <button class="active" aria-label="Symbology"><svg viewBox="0 0 48 48"><use href="#brush" x="1" y="4" width="46" height="40"/></svg></button>
                    <button aria-label="Labels"><svg viewBox="0 0 48 48"><path d="M4 24l5-11h36v22H9z" fill="#fcf46b" stroke="#c4a000" stroke-width="2.500"/><text x="28" y="30" class="tag">abc</text></svg></button>
                    <button aria-label="Mask"><svg viewBox="0 0 48 48"><text x="24" y="30" class="halo">abc</text></svg></button>
                    <button aria-label="3D View"><svg viewBox="0 0 48 48"><path d="M24 1l17 13-17 13L7 14z" fill="#f68c8c" stroke="#a40000" stroke-width="2"/><path d="M5 15l18 13v18L5 35z" fill="#8ae234" stroke="#4e9a06" stroke-width="2"/><path d="M43 15L25 28v18l18-11z" fill="#fce94f" stroke="#c4a000" stroke-width="2"/></svg></button>
                    <button aria-label="Diagrams"><svg viewBox="0 0 48 48"><path d="M11 32V11h26v21M24 18v14" fill="none" stroke="#d99a3d" stroke-width="4"/><rect x="15" y="2" width="18" height="14" fill="#ee6b6b" stroke="#a33"/><path d="M15 15h18v5H15zM3 30h18v6H3zM27 30h18v6H27z" fill="#d99a3d" stroke="#96631c"/><rect x="3" y="35" width="18" height="12" fill="#fcea60"/><rect x="27" y="35" width="18" height="12" fill="#8fb9e6"/></svg></button>
                    <button aria-label="History"><svg viewBox="0 0 48 48"><use href="#redo" x="5" y="2" width="26" height="26"/><use href="#undo" x="20" y="18" width="26" height="26"/></svg></button>
                </div>
                <div class="panel">
                    <div class="scroll">
                        <div class="form">
                            <div class="preview-row"><div class="preview"></div></div>
                            <div class="fields">
                                <span>Color</span>
                                <button class="color-btn" aria-label="Color"><i></i></button>
                                <label for="opacity">Opacity</label>
                                <div class="field-row">
                                    <input type="range" class="slider" aria-label="Opacity slider" value="100">
                                    <div class="spin opacity"><input id="opacity" value="100.0 %"><div class="steps"><button aria-label="Increase"></button><button aria-label="Decrease"></button></div></div>
                                    <svg class="datadef"><use href="#datadef"/></svg>
                                </div>
                                <label for="width">Width</label>
                                <div class="field-row">
                                    <div class="spin width"><input id="width" value="0.26000"><div class="steps"><button aria-label="Increase"></button><button aria-label="Decrease"></button></div></div>
                                    <div class="combo unit"><select aria-label="Unit"><option>Millimeters</option></select></div>
                                    <svg class="datadef"><use href="#datadef"/></svg>
                                </div>
                            </div>
                            <div class="search-row">
                                <div class="search">
                                    <div class="search-box"><svg><use href="#search"/></svg><input aria-label="Search symbols" value="measure"><button class="clear" aria-label="Clear"><svg viewBox="0 0 26 22"><path d="M7 1h19v20H7l-7-10z" fill="#8f8f8f"/><path d="M10 5l10 12M20 5L10 17" stroke="#fff" stroke-width="2.500"/></svg></button></div>
                                    <button class="drop" aria-label="Symbol groups"></button>
                                </div>
                                <svg class="symbols" viewBox="0 0 30 30"><circle cx="7" cy="7" r="6" fill="#d46a34" stroke="#9d4413"/><rect x="1" y="18" width="12" height="10" fill="#8aad88" stroke="#4f8f55" stroke-width="2"/></svg>
                            </div>
                            <div class="styles">
                                <h3>Project Styles</h3>
                                <h3>Default</h3>
                                <div class="measure"><span>00.00 m</span><svg viewBox="0 0 128 14"><path d="M2 0v14M126 0v14" stroke="#555" stroke-width="3"/><path d="M0 14l27-7v7zM128 14l-28-7v7z" fill="#000"/><path d="M0 13h128" stroke="#000" stroke-width="3"/></svg></div>
                            </div>
                        </div>
                        <div class="bar v"><i></i></div>
                        <div class="bar h"><i></i></div>
                    </div>
                    <button class="rendering"><svg viewBox="0 0 16 22"><path d="M2 1l12 10L2 21z" fill="#555" stroke="#1c1c1c" stroke-width="2"/></svg>Layer Rendering</button>
                    <div class="actions">
                        <button class="btn icon" aria-label="Undo"><svg><use href="#undo"/></svg></button>
                        <button class="btn icon" aria-label="Redo"><svg><use href="#redo"/></svg></button>
                        <label class="live"><input type="checkbox" class="check" checked>Live update</label>
                        <button class="btn">Apply</button>
                    </div>

                    <div class="popup">
                        <ul role="listbox" aria-label="Renderer">
                            <li role="option"><svg viewBox="0 0 28 32"><g fill="none" stroke="#1f1f1f" stroke-width="2" stroke-dasharray="2 2"><path d="M2 3h20v6H2zM6 13h20v6H6zM2 23h20v6H2z"/></g></svg>No Symbols</li>
                            <li role="option" class="current"><svg viewBox="0 0 28 32"><g fill="#00ba56" stroke="#005f38" stroke-width="2"><path d="M3 3h19v6H3zM7 13h19v6H7zM3 23h19v6H3z"/></g></svg><span>Single Symbol</span></li>
                            <li role="option" class="chosen"><svg viewBox="0 0 28 32"><g stroke-width="2"><path d="M3 3h20v6H3z" fill="#12a5bf" stroke="#003fc4"/><path d="M7 13h20v6H7z" fill="#00ba56" stroke="#005f38"/><path d="M3 23h20v6H3z" fill="#be0a00" stroke="#5c0a00"/></g></svg>Categorized</li>
                            <li role="option"><svg viewBox="0 0 28 32"><g stroke-width="2"><path d="M3 3h20v6H3z" fill="#ffdd00" stroke="#ff9c00"/><path d="M7 12h20v7H7z" fill="#ff4a00" stroke="#d43200"/><path d="M3 23h20v6H3z" fill="#be0a00" stroke="#5c0a00"/></g></svg>Graduated</li>
                            <li role="option"><svg viewBox="0 0 28 32"><path d="M1 11v16h5M1 15h5" fill="none" stroke="#999" stroke-width="2"/><path d="M2 3h18v6H2z" fill="#eee" stroke="#777" stroke-width="2"/><path d="M7 13h19v6H7zM7 23h19v6H7z" fill="#00ba56" stroke="#005f38" stroke-width="2"/></svg>Rule-based</li>
                            <li role="option"><svg viewBox="0 0 28 32"><path d="M3 3h19v10h4v6h-4v10H3v-6h4V9H3z" fill="#00ba56" stroke="#005f38" stroke-width="2"/></svg>Merged Features</li>
                            <li role="option"><svg></svg>Embedded Symbols</li>
                        </ul>
                        <div class="callout callout-renderer"></div>
                    </div>
                </div>
            </div>
        </section>
    </main>

    <footer class="status">
        <div class="locate"><svg><use href="#search"/></svg><input aria-label="Locate" placeholder="Type to locate (⌘K)"></div>
        <label class="clip coord-label" for="coord"><span>Coordinate</span></label>
        <input id="coord" class="coord" value="23.57°,98.42°">
        <button class="mouse" aria-label="Toggle extents"><svg viewBox="0 0 32 34"><path d="M6 3c5-4 11 6 10 13l-4 2C7 15 2 7 6 3z" fill="#fff" stroke="#000" stroke-width="2.500"/><path d="M8 6l4 8" stroke="#000" stroke-width="2"/><path d="M13 18c5-3 12 3 12 9s-8 6-11 3-4-9-1-12z" fill="#fff" stroke="#000" stroke-width="2.500"/><ellipse cx="19" cy="26" rx="2.500" ry="3" fill="none" stroke="#000" stroke-width="2"/><path d="M20 8h2M25 5h2M28 2h2M1 22h2M4 26h2" stroke="#000" stroke-width="2"/></svg></button>
        <label class="clip scale-label" for="scale"><span>Scale</span></label>
        <div class="scale"><input id="scale" value="1:40405568"><button class="drop" aria-label="Scales"></button></div>
        <button class="lock" aria-label="Lock scale"><svg viewBox="0 0 26 30"><path d="M6 14V8c0-9 13-9 13 0v6" fill="none" stroke="#d0d0c8" stroke-width="2.500"/><rect x="1" y="13" width="23" height="16" rx="2" fill="#5f5f5f"/></svg></button>
        <label class="clip mag-label" for="mag"><span>Magnifier</span></label>
        <div class="spin mag"><input id="mag" value="100%"><div class="steps"><button aria-label="Increase"></button><button aria-label="Decrease"></button></div></div>
        <label class="clip rot-label" for="rot"><span>Rotation</span></label>
        <div class="spin rot"><input id="rot" value="0.0 °"><div class="steps"><button aria-label="Increase"></button><button aria-label="Decrease"></button></div></div>
        <label class="render"><input type="checkbox" class="check" checked>Render</label>
        <button class="crs"><svg viewBox="0 0 28 28"><circle cx="14" cy="14" r="12" fill="#999a94"/><path d="M2 14h24M4 8h20M4 20h20M14 2v24M14 2C5 8 5 20 14 26M14 2c9 6 9 18 0 24" fill="none" stroke="#eee" stroke-width="2"/></svg>EPSG:4326</button>
        <button class="messages" aria-label="Messages"><svg viewBox="0 0 32 32"><path d="M16 1C6 1 1 7 1 14s6 12 13 12l6-1 8 6-2-8c9-8 5-22-10-22z" fill="#5c5c5c"/><g fill="#fff"><circle cx="9" cy="13" r="2.500"/><circle cx="16" cy="13" r="2.500"/><circle cx="23" cy="13" r="2.500"/></g></svg></button>
    </footer>
</body>
</html>
```
FILE: styles.css
```css
* {
    box-sizing: border-box;
}

body {
    margin: 0;
    height: 100vh;
    display: flex;
    flex-direction: column;
    overflow: hidden;
    font-family: Inter, "Liberation Sans", sans-serif;
    font-size: 25px;
    color: #111;
    background: #717171;
}

button, input, select {
    font: inherit;
    color: inherit;
    margin: 0;
    padding: 0;
    border: 0;
    background: none;
    min-width: 0;
}

h1, h2, h3, ul {
    margin: 0;
    padding: 0;
    list-style: none;
}

svg {
    display: block;
    flex: none;
}

.defs {
    position: absolute;
    width: 0;
    height: 0;
}

/* title bar */
.titlebar {
    display: grid;
    grid-template-columns: 1fr auto 1fr;
    align-items: center;
    height: 51px;
    flex: none;
    padding: 0 16px 7px 12px;
    background: #f2eeed;
    border-bottom: 1px solid #444;
}

.titlebar h1 {
    font-size: 26px;
    line-height: 30px;
    color: #3c3a3a;
}

.lights {
    display: flex;
    gap: 16px;
}

.light {
    width: 24px;
    height: 24px;
    border-radius: 50%;
}

.red { background: #ff5f57; border: 1px solid #e0443e; }
.amber { background: #febc2e; border: 1px solid #dea123; }
.green { background: #28c840; border: 1px solid #1aab29; }

/* toolbars */
.toolbar {
    display: flex;
    align-items: center;
    height: 76px;
}

.toolbar.second {
    height: 78px;
}

.tool {
    flex: none;
    width: 68px;
    height: 66px;
    display: flex;
    align-items: center;
    justify-content: center;
    border-radius: 6px;
    position: relative;
}

.tool svg {
    width: 48px;
    height: 48px;
}

.tool.active, .minibar .active {
    border: 2px solid #efefef;
    border-radius: 6px;
}

.tool.off svg {
    opacity: .3;
    filter: saturate(.7);
}

.tool.off.strong svg {
    opacity: .45;
}

.grip {
    flex: none;
    width: 16px;
    height: 18px;
    border-right: 3px solid #a4a4a4;
}

.grip.first {
    width: 6px;
}

.more {
    flex: none;
    width: 24px;
    height: 40px;
    display: flex;
    align-items: center;
    justify-content: center;
}

.more::after, .menu::after, .combo::after, .drop::after {
    content: "";
    border: 4px solid transparent;
    border-top: 8px solid #b1b1b1;
    border-bottom: 0;
}

.menu {
    position: relative;
}

.menu::after {
    position: absolute;
    right: 6px;
    bottom: 8px;
}

.more.dim, .tool.menu::after {
    opacity: .8;
}

.ratio {
    font: bold 18px "Liberation Sans", sans-serif;
    text-anchor: middle;
}

.extend {
    width: 44px;
    padding-left: 14px;
    font-size: 20px;
    line-height: 40px;
    color: #2a2a2a;
}

.extend.end {
    margin-left: auto;
    width: 28px;
    padding: 0 8px 0 0;
}

/* docks */
.workspace {
    flex: 1;
    min-height: 0;
    display: grid;
    grid-template-columns: 464px minmax(0, 1fr) 816px;
}

.left {
    display: flex;
    flex-direction: column;
    min-height: 0;
}

.dock-title {
    display: grid;
    grid-template-columns: 1fr auto 1fr;
    align-items: center;
    height: 38px;
    flex: none;
}

.left .dock-title {
    padding-right: 5px;
}

.left .dock-title h2 {
    padding-right: 50px;
}

.dock-title h2 {
    grid-column: 2;
    font-size: 22px;
    font-weight: 400;
    line-height: 28px;
}

.x {
    justify-self: end;
    padding-bottom: 4px;
}

.x svg {
    width: 22px;
    height: 22px;
}

.minibar {
    display: flex;
    align-items: center;
    height: 63px;
    padding-bottom: 5px;
}

.minibar button {
    width: 52px;
    height: 50px;
    display: flex;
    align-items: center;
    justify-content: center;
}

.minibar svg {
    width: 32px;
    height: 32px;
}

.minibar .more {
    width: 24px;
}

.minibar .menu::after {
    right: 4px;
    bottom: 10px;
}

.tree {
    display: grid;
    grid-template-columns: minmax(0, 1fr) 16px;
    grid-template-rows: 242px 16px;
    padding: 2px;
    margin-right: 2px;
    border: 2px solid #363636;
    border-left: 0;
    border-radius: 0 4px 4px 0;
    background: #b1b1b1;
    font-size: 26px;
}

.tree ul {
    overflow: hidden;
}

.tree li {
    display: flex;
    align-items: center;
    height: 36px;
    padding-left: 10px;
    white-space: nowrap;
}

.tree .child {
    padding-left: 42px;
    font-size: 25px;
}

.tree li svg {
    width: 28px;
    height: 28px;
    margin: 0 14px 0 20px;
}

.tree li svg.star {
    width: 32px;
    height: 32px;
    margin: 0 12px 0 18px;
}

.tri {
    flex: none;
    width: 10px;
    height: 10px;
    background: #6e6e6e;
    clip-path: polygon(0 0, 100% 50%, 0 100%);
}

.tri.open {
    clip-path: polygon(0 0, 100% 0, 50% 100%);
}

.bar {
    background: #363636;
    border-radius: 4px;
    padding: 1px;
}

.bar i {
    display: block;
    background: #717171;
    border: 1px solid #363636;
    border-radius: 3px;
    height: 100%;
}

.tree .v i { height: 28%; }
.tree .h i { width: 55%; }

.layers {
    flex: 1;
    min-height: 0;
    display: flex;
    flex-direction: column;
    margin-top: 13px;
}

.layers .minibar {
    height: 61px;
    padding: 0 0 1px;
}

.layers .minibar .active {
    width: 50px;
    margin: 0 0 0 2px;
}

.layer-list {
    flex: 1;
    position: relative;
    padding-top: 2px;
    border: 2px solid #363636;
    border-left: 0;
    border-radius: 0 4px 4px 0;
    background: #b1b1b1;
}

.layer {
    display: flex;
    align-items: center;
    height: 44px;
    padding-left: 48px;
    margin-right: 2px;
    font-size: 27px;
    font-weight: 700;
}

.layer.selected {
    background: #efefef;
}

.selected span {
    text-decoration: underline;
    text-decoration-thickness: 3px;
    text-underline-offset: 4px;
    text-decoration-skip-ink: none;
}

.check {
    appearance: none;
    flex: none;
    width: 26px;
    height: 26px;
    border: 2px solid #363636;
    border-radius: 7px;
    background: #b1b1b1;
}

.check:checked {
    background: #b1b1b1 url("data:image/svg+xml,%3Csvg xmlns='http://www.w3.org/2000/svg' viewBox='0 0 22 22'%3E%3Cpath d='M3 12l6 7L19 2' fill='none' stroke='%23262626' stroke-width='3'/%3E%3C/svg%3E");
}

.line-swatch, .fill-swatch {
    width: 32px;
    height: 2px;
    margin: 0 12px 0 14px;
    background: #c9b2a5;
}

.fill-swatch {
    height: 28px;
    background: #000;
}

/* highlight frames lie over the widgets */
.callout {
    position: absolute;
    border: 5px solid #ff2f6c;
    border-radius: 2px;
    pointer-events: none;
}

.callout-layer {
    top: -11px;
    left: 31px;
    width: 350px;
    height: 67px;
}

.callout-renderer {
    top: 72px;
    left: -24px;
    width: 262px;
    height: 73px;
}

.canvas {
    margin: 5px 0 4px 16px;
    background: #fff;
    min-height: 0;
}

.canvas svg {
    width: 100%;
    height: 100%;
}

/* layer styling */
.styling {
    display: flex;
    flex-direction: column;
    min-height: 0;
    padding: 0 6px 0 24px;
}

.styling .dock-title {
    margin-right: -4px;
    margin-left: -54px;
}

.combo, .spin {
    display: flex;
    flex: none;
    align-items: center;
    height: 48px;
    border: 2px solid #1f1f1f;
    border-radius: 5px;
    background: linear-gradient(#555, #343434);
    color: #b1b1b1;
}

.combo::after {
    margin-right: 10px;
}

.combo select {
    appearance: none;
    flex: 1;
    height: 100%;
    padding-left: 7px;
}

.layer-combo {
    margin-top: 7px;
    font-size: 26px;
}

.layer-combo svg {
    width: 34px;
    height: 34px;
    margin-left: 6px;
}

.layer-combo select {
    padding-left: 9px;
}

.styling-body {
    flex: 1;
    min-height: 0;
    display: flex;
    margin: 14px 0 7px;
}

.pages {
    width: 76px;
    flex: none;
    margin: 0 0 2px 2px;
    padding: 4px;
    background: #363636;
    border-radius: 4px;
}

.pages button {
    width: 100%;
    height: 60px;
    display: flex;
    align-items: center;
    justify-content: center;
}

.pages .active {
    background: #efefef;
}

.pages svg {
    width: 46px;
    height: 46px;
}

.tag, .halo {
    font: 18px "DejaVu Sans Mono", monospace;
    text-anchor: middle;
}

.halo {
    font: bold 22px "Open Sans", sans-serif;
    fill: #3a3f46;
    stroke: #e8eefc;
    stroke-width: 10px;
    stroke-linejoin: round;
    paint-order: stroke;
}

.panel {
    flex: 1;
    min-width: 0;
    display: flex;
    flex-direction: column;
    position: relative;
    padding-left: 8px;
}

.scroll {
    flex: 1;
    min-height: 0;
    display: grid;
    grid-template-columns: minmax(0, 1fr) 16px;
    grid-template-rows: minmax(0, 1fr) 16px;
    margin: 0 10px 0 10px;
}

.scroll .v { margin-top: 334px; }
.scroll .v i { height: 80%; }
.scroll .h i { width: 92%; }

.form {
    overflow: hidden;
    display: flex;
    flex-direction: column;
}

.preview-row {
    height: 334px;
    flex: none;
    display: flex;
    align-items: flex-end;
    padding: 0 0 32px 210px;
}

.preview {
    width: 336px;
    height: 120px;
    border: 2px solid #363636;
    border-radius: 4px;
    background: linear-gradient(#999, #b1b1b1);
}

.fields {
    display: grid;
    grid-template-columns: 118px minmax(0, 1fr);
    grid-template-rows: 64px 67px 61px;
    align-items: center;
    padding-left: 12px;
}

.color-btn {
    width: 560px;
    height: 56px;
    padding: 0 4px;
    border: 2px solid #363636;
    border-radius: 5px;
    background: linear-gradient(#555, #343434);
}

.color-btn i {
    display: block;
    height: 32px;
    background: #91522d;
}

.field-row {
    display: flex;
    align-items: center;
}

.slider {
    appearance: none;
    flex: none;
    width: 284px;
    height: 20px;
    margin: 0 8px 4px 2px;
    border-radius: 4px;
}

.slider::-webkit-slider-runnable-track {
    height: 16px;
    border: 2px solid #363636;
    border-radius: 4px;
    background: #b1b1b1;
}

.slider::-webkit-slider-thumb {
    appearance: none;
    width: 44px;
    height: 20px;
    margin-top: -4px;
    border: 2px solid #363636;
    border-radius: 4px;
    background: linear-gradient(135deg, #a8a8a8, #8c8c8c);
}

.spin input {
    flex: 1;
    width: 0;
    height: 100%;
    padding-left: 9px;
}

.spin.opacity { width: 200px; }
.spin.width { width: 218px; }

.combo.unit {
    width: 264px;
    margin-left: 12px;
}

.steps {
    display: flex;
    flex-direction: column;
    gap: 14px;
    margin-right: 9px;
}

.steps button {
    width: 8px;
    height: 8px;
    background: #c4c4c4;
    clip-path: polygon(50% 0, 100% 100%, 0 100%);
}

.steps button + button {
    clip-path: polygon(0 0, 100% 0, 50% 100%);
}

.datadef {
    width: 32px;
    height: 32px;
    margin-left: 19px;
}

.search-row {
    display: flex;
    align-items: center;
    gap: 22px;
    margin: 20px 0 12px 2px;
}

.symbols {
    width: 30px;
    height: 30px;
}

.search {
    width: 634px;
    flex: none;
    height: 48px;
    display: flex;
    gap: 6px;
    padding: 2px;
    border: 2px solid #363636;
    border-radius: 5px;
    background: #b1b1b1;
}

.search-box {
    flex: 1;
    display: flex;
    align-items: center;
    margin: 2px 0 2px 2px;
    padding: 0 16px;
    border: 2px solid #363636;
    border-radius: 5px;
}

.search-box svg {
    width: 26px;
    height: 26px;
}

.search-box input {
    flex: 1;
    padding-left: 18px;
}

.drop {
    width: 26px;
    display: flex;
    align-items: center;
    justify-content: center;
    border-radius: 3px;
    background: linear-gradient(#555, #343434);
}

.styles {
    flex: 1;
    min-height: 0;
    margin-left: 4px;
    padding: 16px 0 0 12px;
    border: 2px solid #363636;
    border-width: 2px 0 0 2px;
    border-radius: 4px 0 0 0;
    background: #b1b1b1;
}

.styles h3 {
    height: 50px;
    padding-top: 14px;
    font-size: 26px;
    line-height: 33px;
    border-bottom: 2px solid #a5a5a5;
}

.styles h3:first-child {
    height: 35px;
    padding: 0;
}

.measure {
    width: 128px;
    margin: 28px 0 0 59px;
    text-align: center;
    font-size: 28px;
    line-height: 32px;
}

.measure svg {
    width: 128px;
    height: 14px;
    margin-top: -12px;
}

.rendering {
    display: flex;
    align-items: center;
    height: 94px;
    padding: 8px 0 0 15px;
    font-size: 26px;
    font-weight: 700;
}

.rendering svg {
    width: 16px;
    height: 22px;
    margin-right: 20px;
}

.actions {
    display: flex;
    align-items: center;
    gap: 12px;
    height: 50px;
}

.btn {
    height: 48px;
    width: 86px;
    border: 2px solid #363636;
    border-radius: 5px;
    background: linear-gradient(#a6a6a6, #868686);
}

.btn.icon {
    width: 50px;
    height: 50px;
    display: flex;
    align-items: center;
    justify-content: center;
}

.btn.icon svg {
    width: 26px;
    height: 26px;
}

.live {
    display: flex;
    align-items: center;
    gap: 15px;
    margin: 0 3px 0 auto;
}

/* renderer drop-down lies over the form */
.popup {
    position: absolute;
    top: -24px;
    left: 14px;
    right: 6px;
    padding: 2px;
    background: #363636;
    border: 2px solid #1f1f1f;
    border-width: 2px 0;
    box-shadow: 0 8px 24px rgba(0, 0, 0, .3);
    color: #b1b1b1;
}

.popup ul {
    padding: 4px 2px;
    border: 2px solid #b1b1b1;
    border-width: 2px 0;
    margin: -2px 0;
}

.popup li {
    display: flex;
    align-items: center;
    height: 40px;
}

.popup li svg {
    width: 28px;
    height: 32px;
    margin: 0 23px 0 9px;
}

.popup .current span {
    text-decoration: underline;
    text-decoration-thickness: 1px;
    text-underline-offset: 6px;
    text-decoration-skip-ink: none;
}

.popup .chosen {
    background: #efefef;
    color: #111;
}

/* status bar */
.status {
    flex: none;
    display: flex;
    align-items: center;
    height: 53px;
    padding: 9px 28px 0 4px;
    font-size: 22px;
}

.locate, .scale {
    flex: none;
    height: 48px;
    display: flex;
    align-items: center;
    border: 2px solid #363636;
    border-radius: 5px;
    background: #b1b1b1;
}

.locate {
    width: 428px;
    font-size: 25px;
}

.locate svg {
    width: 26px;
    height: 26px;
    margin: 0 18px 0 16px;
}

.locate input {
    flex: 1;
}

.locate input::placeholder {
    color: #5e5e5e;
    opacity: 1;
}

.clip {
    flex: none;
    display: flex;
    justify-content: center;
    overflow: hidden;
    white-space: nowrap;
}

.coord-label { width: 83px; margin: 0 8px 0 69px; }
.scale-label { width: 26px; margin: 0 7px 0 28px; }
.mag-label { width: 70px; margin: 0 8px 0 20px; }
.rot-label { width: 54px; margin: 0 20px 0 21px; }

.coord {
    width: 185px;
    height: 42px;
    text-align: center;
    font-size: 23px;
    border: 2px solid #363636;
    border-radius: 5px;
    background: #b1b1b1;
}

.mouse svg {
    width: 32px;
    height: 34px;
    margin-left: 10px;
}

.scale {
    width: 171px;
    padding: 2px;
}

.scale input {
    flex: 1;
    width: 0;
}

.scale .drop {
    height: 100%;
}

.lock svg {
    width: 26px;
    height: 30px;
    margin-left: 24px;
}

.mag { width: 184px; }
.rot { width: 186px; }

.render {
    display: flex;
    align-items: center;
    gap: 14px;
    margin-left: 14px;
}

.crs {
    display: flex;
    align-items: center;
    gap: 7px;
    margin-left: 28px;
}

.crs svg {
    width: 28px;
    height: 28px;
}

.messages {
    margin-left: auto;
}

.messages svg {
    width: 32px;
    height: 32px;
}
```
